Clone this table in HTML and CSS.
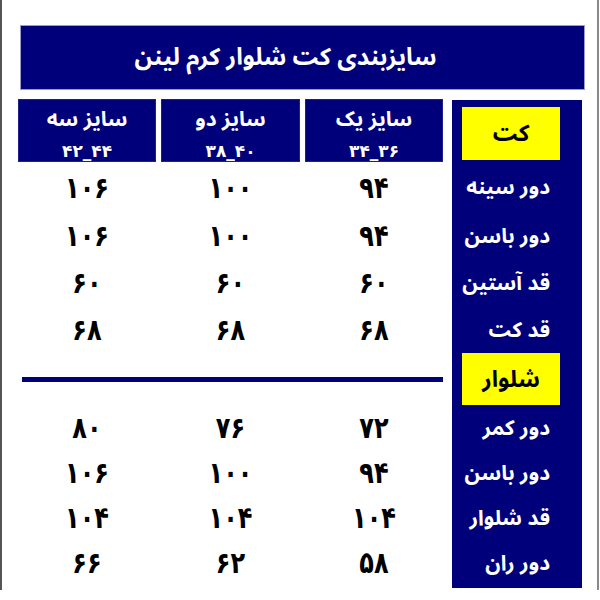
FILE: index.html
```html
<!DOCTYPE html>
<html lang="fa">
<head>
<meta charset="utf-8">
<title>سایزبندی کت شلوار کرم لینن</title>
<link rel="stylesheet" href="styles.css">
</head>
<body>
<div class="frame">
  <div class="title">سایزبندی کت شلوار کرم لینن</div>
  <div class="chart" dir="rtl">
    <div class="label-bg"></div>

    <div class="cell-yellow r1">کت</div>
    <div class="head c2 r1"><span class="hname">سایز یک</span><span class="hrange">۳۴_۳۶</span></div>
    <div class="head c3 r1"><span class="hname">سایز دو</span><span class="hrange">۳۸_۴۰</span></div>
    <div class="head c4 r1"><span class="hname">سایز سه</span><span class="hrange">۴۲_۴۴</span></div>

    <div class="label r2">دور سینه</div>
    <div class="val c2 r2">۹۴</div><div class="val c3 r2">۱۰۰</div><div class="val c4 r2">۱۰۶</div>

    <div class="label r3">دور باسن</div>
    <div class="val c2 r3">۹۴</div><div class="val c3 r3">۱۰۰</div><div class="val c4 r3">۱۰۶</div>

    <div class="label r4">قد آستین</div>
    <div class="val c2 r4">۶۰</div><div class="val c3 r4">۶۰</div><div class="val c4 r4">۶۰</div>

    <div class="label r5">قد کت</div>
    <div class="val c2 r5">۶۸</div><div class="val c3 r5">۶۸</div><div class="val c4 r5">۶۸</div>

    <div class="cell-yellow second r6">شلوار</div>
    <div class="divider r6"></div>

    <div class="label r7">دور کمر</div>
    <div class="val c2 r7">۷۲</div><div class="val c3 r7">۷۶</div><div class="val c4 r7">۸۰</div>

    <div class="label r8">دور باسن</div>
    <div class="val c2 r8">۹۴</div><div class="val c3 r8">۱۰۰</div><div class="val c4 r8">۱۰۶</div>

    <div class="label r9">قد شلوار</div>
    <div class="val c2 r9">۱۰۴</div><div class="val c3 r9">۱۰۴</div><div class="val c4 r9">۱۰۴</div>

    <div class="label r10">دور ران</div>
    <div class="val c2 r10">۵۸</div><div class="val c3 r10">۶۲</div><div class="val c4 r10">۶۶</div>
  </div>
</div>
</body>
</html>
```
FILE: styles.css
```css
html, body {
  margin: 0;
  padding: 0;
  background: #ffffff;
}
body {
  width: 600px;
  height: 600px;
  overflow: hidden;
  font-family: "Noto Sans Arabic", "Noto Naskh Arabic", "DejaVu Sans", sans-serif;
  font-weight: bold;
}
.frame {
  box-sizing: border-box;
  width: 599px;
  height: 590px;
  border-left: 2px solid #555555;
  border-right: 2px solid #888888;
  padding-top: 25px;
}
.title {
  box-sizing: border-box;
  margin-left: 18px;
  width: 565px;
  height: 65px;
  background: #00007a;
  border: 1px solid #9a9ad0;
  color: #ffffff;
  font-size: 24px;
  display: flex;
  align-items: center;
  justify-content: center;
  padding-right: 34px;
  direction: rtl;
}
.chart {
  margin-top: 9px;
  margin-left: 16px;
  width: 564px;
  display: grid;
  grid-template-columns: 134px 138px 139px 138px;
  grid-template-rows: 63px 50px 47px 47px 47px 52px 45px 45px 45px 45px 3px;
  column-gap: 5px;
}
.label-bg {
  grid-column: 1;
  grid-row: 1 / -1;
  width: 130px;
  justify-self: start;
  margin-top: 1px;
  background: #00007a;
}
.r1 { grid-row: 1; }
.r2 { grid-row: 2; }
.r3 { grid-row: 3; }
.r4 { grid-row: 4; }
.r5 { grid-row: 5; }
.r6 { grid-row: 6; }
.r7 { grid-row: 7; }
.r8 { grid-row: 8; }
.r9 { grid-row: 9; }
.r10 { grid-row: 10; }
.c2 { grid-column: 2; }
.c3 { grid-column: 3; }
.c4 { grid-column: 4; }
.cell-yellow {
  grid-column: 1;
  justify-self: start;
  align-self: start;
  margin-top: 8px;
  margin-inline-start: 22px;
  width: 98px;
  height: 53px;
  background: #ffff00;
  color: #000000;
  font-size: 23px;
  display: flex;
  align-items: center;
  justify-content: center;
}
.cell-yellow.second {
  margin-top: 0;
  height: 52px;
}
.head {
  background: #00007a;
  color: #ffffff;
  display: flex;
  flex-direction: column;
  align-items: center;
  justify-content: center;
  border: 1px solid #20208c;
  box-sizing: border-box;
}
.hname {
  display: block;
  font-size: 21px;
  line-height: 36px;
  margin-bottom: 4px;
}
.hrange {
  display: block;
  direction: ltr;
  unicode-bidi: isolate;
  font-family: "DejaVu Sans", sans-serif;
  font-size: 17px;
  line-height: 20px;
}
.label {
  grid-column: 1;
  color: #ffffff;
  font-size: 21px;
  display: flex;
  align-items: center;
  padding-inline-start: 32px;
}
.val {
  color: #000000;
  font-family: "DejaVu Sans", sans-serif;
  font-size: 30px;
  display: flex;
  align-items: center;
  justify-content: center;
  transform: scaleX(0.8);
}
.divider {
  grid-column: 2 / 5;
  align-self: center;
  height: 5px;
  margin-left: 4px;
  background: #00007a;
}
```
